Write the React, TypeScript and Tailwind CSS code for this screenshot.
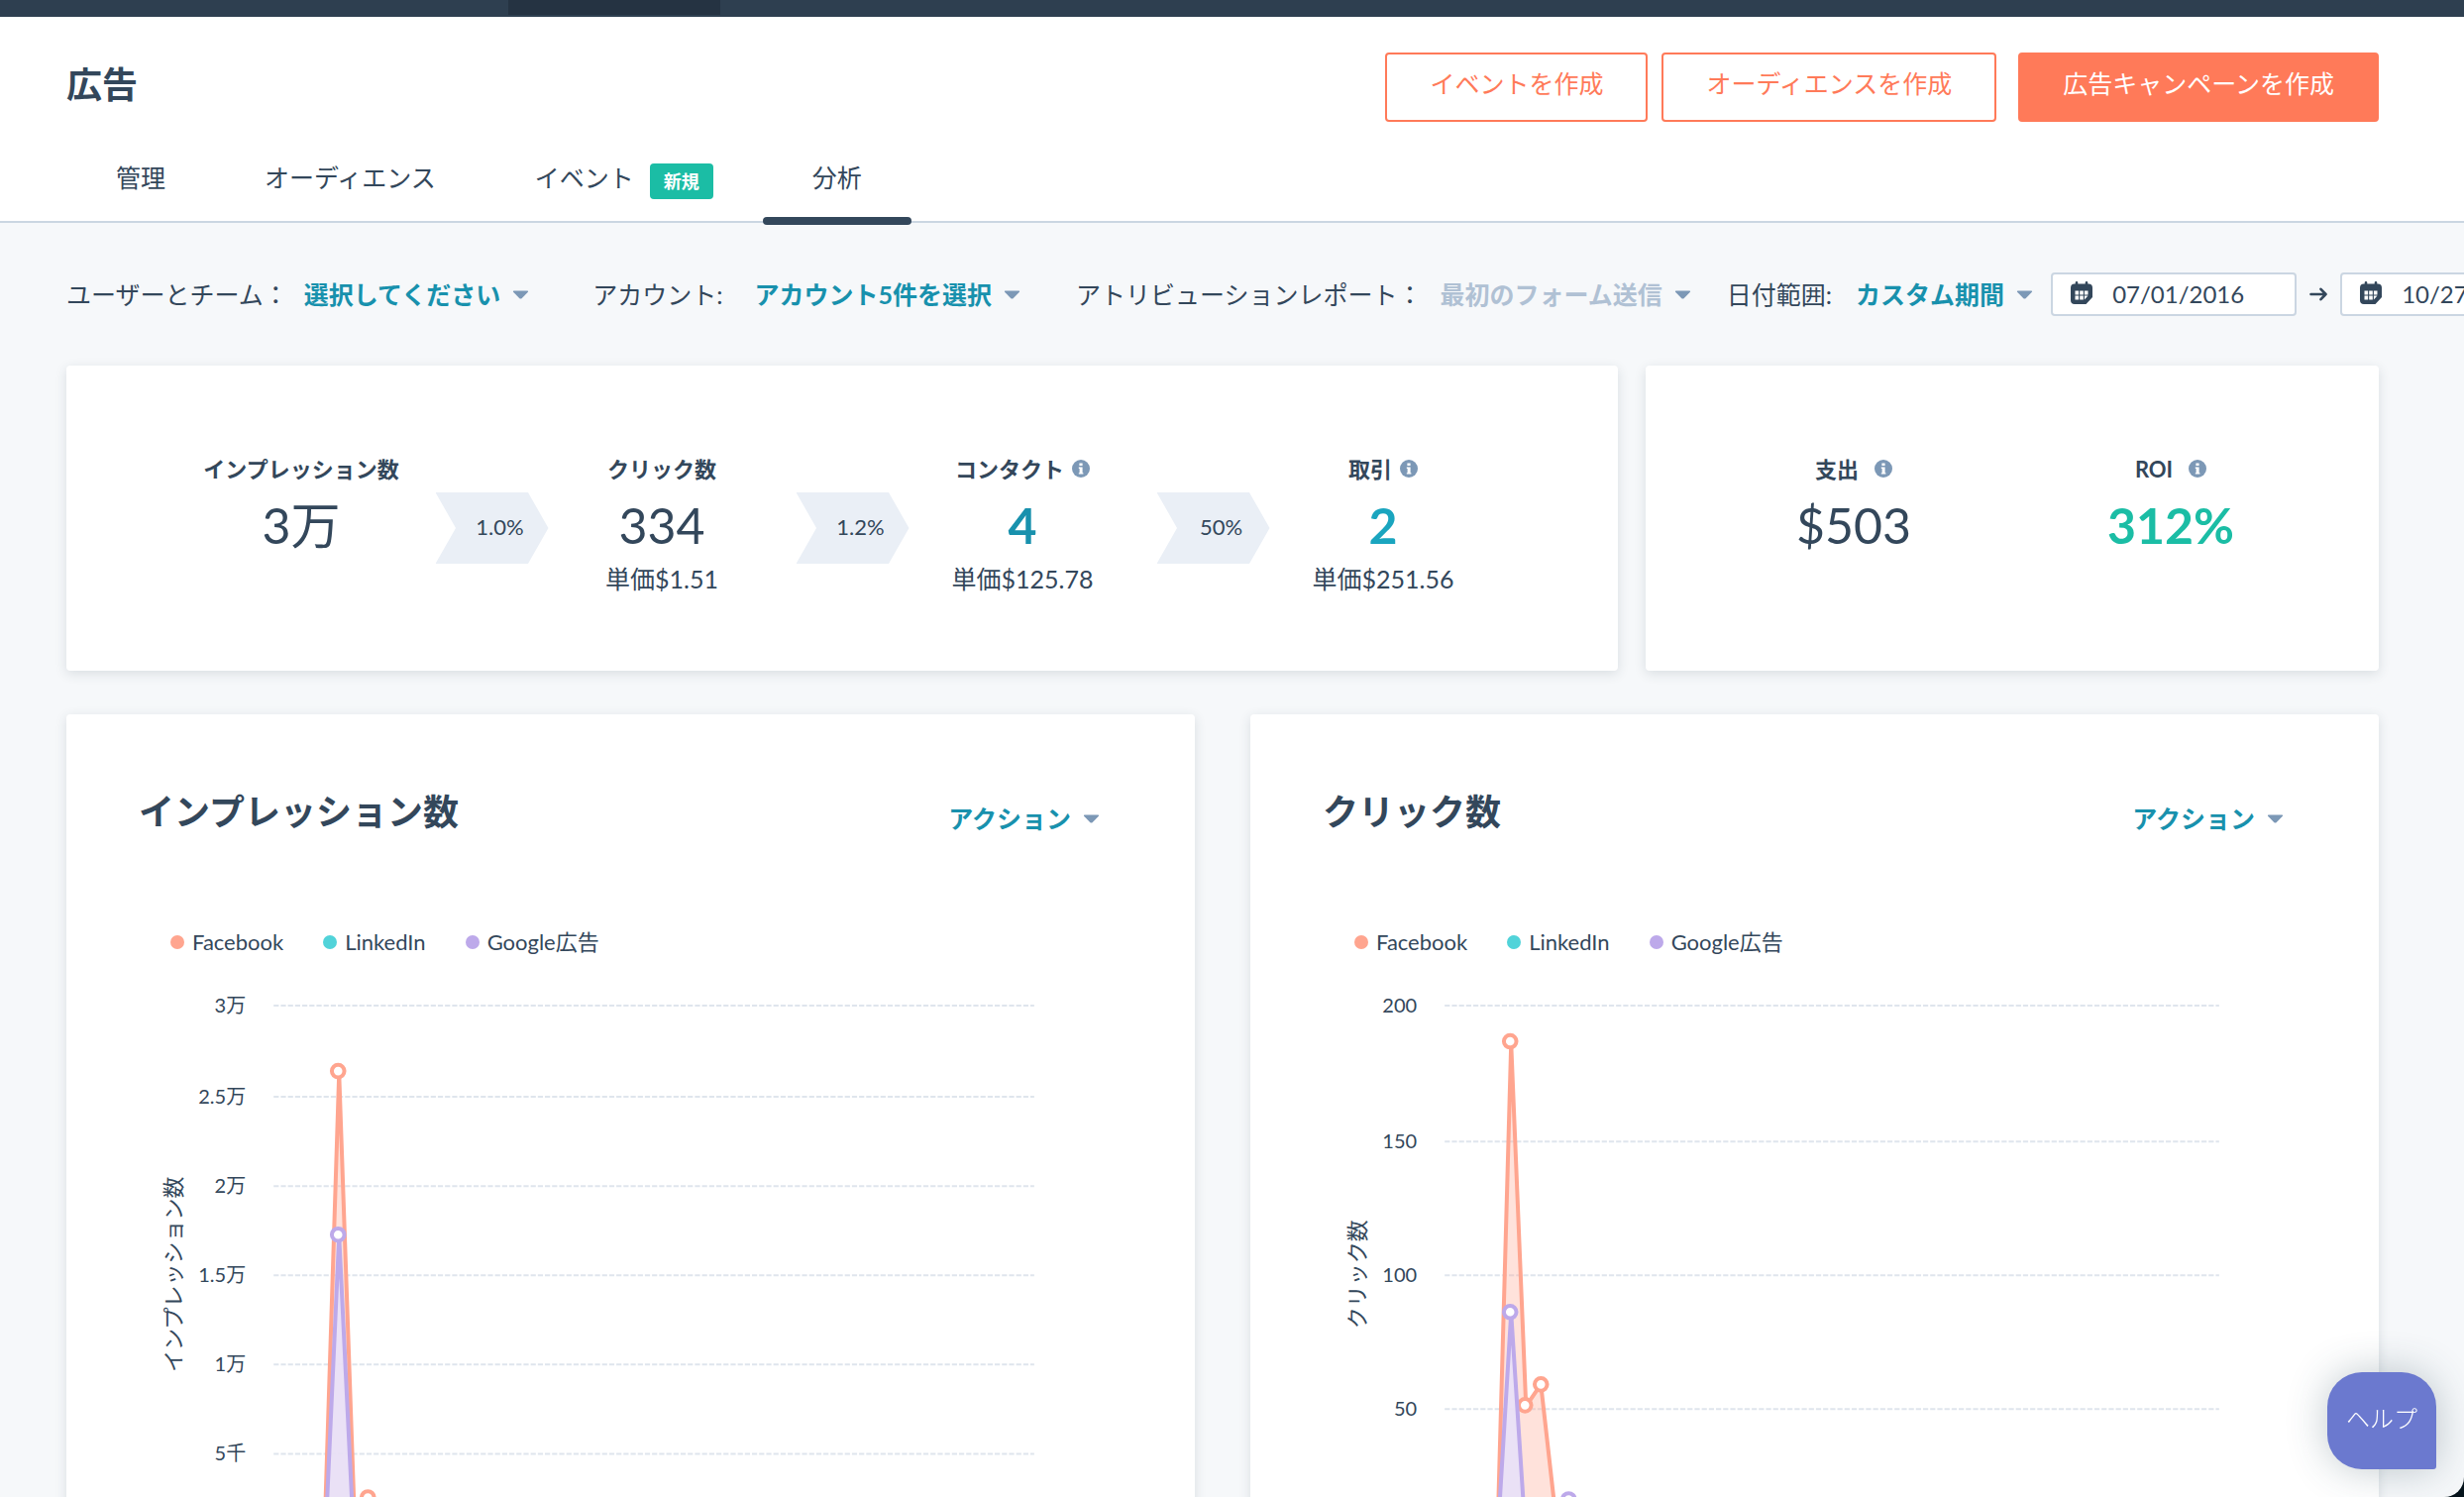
import React, { useState } from "react";

interface Filter {
  id: string;
  label: string;
  value: string;
  labelGap: string;
  itemGap: string;
  disabled?: boolean;
}

interface Series {
  color: string;
  line: number[][];
  dots: number[][];
}

interface ChartData {
  title: string;
  plotLeft: number;
  plotRight: number;
  ticks: { label: string; y: number }[];
  series: Series[];
}

const tabs = [
  { label: "管理" },
  { label: "オーディエンス" },
  { label: "イベント", badge: "新規" },
  { label: "分析", active: true },
];

const filters: Filter[] = [
  {
    id: "team",
    label: "ユーザーとチーム：",
    value: "選択してください",
    labelGap: "gap-4",
    itemGap: "mr-16",
  },
  {
    id: "account",
    label: "アカウント:",
    value: "アカウント5件を選択",
    labelGap: "gap-8",
    itemGap: "mr-14",
  },
  {
    id: "attribution",
    label: "アトリビューションレポート：",
    value: "最初のフォーム送信",
    labelGap: "gap-[18px]",
    itemGap: "mr-9",
    disabled: true,
  },
  {
    id: "range",
    label: "日付範囲:",
    value: "カスタム期間",
    labelGap: "gap-6",
    itemGap: "mr-[18px]",
  },
];

const funnel = [
  { label: "インプレッション数", value: "3万", style: "font-normal" },
  {
    label: "クリック数",
    value: "334",
    style: "font-normal",
    cost: "単価$1.51",
    rate: "1.0%",
  },
  {
    label: "コンタクト",
    value: "4",
    style: "font-bold text-[#1891ad]",
    cost: "単価$125.78",
    rate: "1.2%",
    infoGap: "gap-2",
  },
  {
    label: "取引",
    value: "2",
    style: "font-bold text-[#1aa5bf]",
    cost: "単価$251.56",
    rate: "50%",
    infoGap: "gap-2",
  },
];

const legend = [
  { name: "Facebook", dot: "bg-[#ffa58f]" },
  { name: "LinkedIn", dot: "bg-[#51d3d9]" },
  { name: "Google広告", dot: "bg-[#bda9ea]" },
];

const ORANGE = "#ffa58f";
const PURPLE = "#bda9ea";

const charts: ChartData[] = [
  {
    title: "インプレッション数",
    plotLeft: 209,
    plotRight: 976,
    ticks: [
      { label: "3万", y: 30 },
      { label: "2.5万", y: 122 },
      { label: "2万", y: 212 },
      { label: "1.5万", y: 302 },
      { label: "1万", y: 392 },
      { label: "5千", y: 482 },
    ],
    series: [
      {
        color: ORANGE,
        line: [
          [260, 572],
          [275, 98],
          [291, 560],
          [305, 526],
          [320, 572],
        ],
        dots: [
          [274, 96],
          [304, 526],
        ],
      },
      {
        color: PURPLE,
        line: [
          [261, 572],
          [275, 262],
          [290, 572],
        ],
        dots: [[274, 261]],
      },
    ],
  },
  {
    title: "クリック数",
    plotLeft: 196,
    plotRight: 977,
    ticks: [
      { label: "200", y: 30 },
      { label: "150", y: 167 },
      { label: "100", y: 302 },
      { label: "50", y: 437 },
    ],
    series: [
      {
        color: ORANGE,
        line: [
          [249, 572],
          [263, 68],
          [278, 434],
          [293, 412],
          [311, 572],
        ],
        dots: [
          [262, 66],
          [277, 433],
          [293, 412],
        ],
      },
      {
        color: PURPLE,
        line: [
          [249, 572],
          [263, 340],
          [278, 572],
          [322, 528],
          [337, 572],
        ],
        dots: [
          [262, 339],
          [321, 528],
        ],
      },
    ],
  },
];

const Caret = () => (
  <svg width="17" height="9" viewBox="0 0 17 9" className="shrink-0">
    <path d="M1.5 0.5h14q1 .3.4 1.2L9.8 7.9q-1.3 1.1-2.6 0L1.1 1.7Q.5.8 1.5.5z" fill="#7c98b6" />
  </svg>
);

const InfoIcon = () => (
  <svg width="18" height="18" viewBox="0 0 18 18" className="shrink-0">
    <circle cx="9" cy="9" r="9" fill="#7c98b6" />
    <path d="M7.4 3.4h3.2v2.6H7.4zM6.8 7.6h3.8v5.6h.8v1.4H6.8v-1.4h.8V9h-.8z" fill="#fff" />
  </svg>
);

const CalendarIcon = () => (
  <svg width="22" height="23" viewBox="0 0 22 23" className="mb-1 shrink-0">
    <path
      d="M6 0q1.3 0 1.3 1.3V2.5h7.4V1.3Q14.7 0 16 0t1.3 1.3V2.5H18q4 0 4 4V16l-6.500 7H4q-4 0-4-4V6.500q0-4 4-4h.7V1.300Q4.700 0 6 0z"
      fill="#33475b"
    />
    <path
      d="M4.500 9.500h3.600v4H4.500zM9.200 9.500h3.600v4H9.200zM13.900 9.500h3.600v4H13.900zM4.500 14.600h3.600v4H4.500zM9.200 14.600h3.600v4H9.200zM13.900 14.600h3.600l-3.600 4z"
      fill="#fff"
    />
  </svg>
);

const RightArrow = () => (
  <svg width="18" height="14" viewBox="0 0 18 14" className="mx-[13px] shrink-0">
    <path
      d="M1.500 7h15M11.500 1.800L16.500 7l-5 5.200"
      fill="none"
      stroke="#33475b"
      strokeWidth="2.600"
      strokeLinecap="round"
      strokeLinejoin="round"
    />
  </svg>
);

const FilterSelect = ({ filter }: { filter: Filter }) => (
  <div className={`flex shrink-0 items-center ${filter.labelGap} ${filter.itemGap}`}>
    <label htmlFor={filter.id}>{filter.label}</label>
    <div className="flex items-center gap-3">
      <select
        id={filter.id}
        disabled={filter.disabled}
        className={`field-sizing-content appearance-none bg-transparent font-bold opacity-100 ${
          filter.disabled ? "text-[#b0c1d4]" : "text-[#1891ad]"
        }`}
      >
        <option>{filter.value}</option>
      </select>
      <Caret />
    </div>
  </div>
);

const DateInput = ({ label, initial }: { label: string; initial: string }) => {
  const [value, setValue] = useState(initial);
  return (
    <label className="flex h-11 w-62 shrink-0 items-center gap-5 rounded-[4px] border-2 border-[#cbd6e2] bg-white px-[18px]">
      <CalendarIcon />
      <input
        type="text"
        aria-label={label}
        value={value}
        onChange={(e) => setValue(e.target.value)}
        className="w-full min-w-0 bg-transparent text-2xl outline-none"
      />
    </label>
  );
};

const RateArrow = ({ rate }: { rate: string }) => (
  <div className="w-[135px] shrink-0 pt-10 pl-[21px]">
    <div className="flex h-18 items-center justify-center bg-[#eaeff6] pb-1 pl-4 text-[22px] [clip-path:polygon(0_0,82%_0,100%_50%,82%_100%,0_100%,18%_50%)]">
      {rate}
    </div>
  </div>
);

interface MetricProps {
  label: string;
  value: string;
  style: string;
  cost?: string;
  infoGap?: string;
}

const Metric = ({ label, value, style, cost, infoGap }: MetricProps) => (
  <div className="flex flex-col items-center">
    <div
      className={`flex h-8 items-center text-[22px] font-bold whitespace-nowrap ${infoGap ?? ""}`}
    >
      {label}
      {infoGap && <InfoIcon />}
    </div>
    <div className={`mt-[5px] flex h-18 items-center text-[50px] leading-none ${style}`}>
      {value}
    </div>
    {cost && <div className="h-9 text-[25px] leading-9">{cost}</div>}
  </div>
);

const AreaChart = ({ data }: { data: ChartData }) => (
  <svg viewBox="0 0 1138 640" className="block h-auto w-full" role="img" aria-label={data.title}>
    {data.ticks.map((tick) => (
      <g key={tick.label}>
        <line
          x1={data.plotLeft}
          x2={data.plotRight}
          y1={tick.y}
          y2={tick.y}
          stroke="#dfe5ed"
          strokeWidth="2"
          strokeDasharray="5.2 2"
        />
        <text x={data.plotLeft - 28} y={tick.y + 7} textAnchor="end" fontSize="20" fill="#33475b">
          {tick.label}
        </text>
      </g>
    ))}
    <text
      transform="translate(116 301) rotate(-90)"
      textAnchor="middle"
      fontSize="22"
      fill="#33475b"
    >
      {data.title}
    </text>
    {data.series.map((s) => {
      const points = s.line.map((p) => p.join(",")).join(" ");
      return (
        <g key={s.color}>
          {s.color === PURPLE && <polygon points={points} fill="#fff" fillOpacity="0.9" />}
          <polygon points={points} fill={s.color} fillOpacity="0.32" />
          <polyline points={points} fill="none" stroke={s.color} strokeWidth="4" />
          {s.dots.map(([x, y]) => (
            <circle key={x} cx={x} cy={y} r="6.3" fill="#fff" stroke={s.color} strokeWidth="4" />
          ))}
        </g>
      );
    })}
  </svg>
);

const ChartCard = ({ data }: { data: ChartData }) => (
  <section className="rounded-[4px] bg-white pt-[75px] shadow-[0_3px_12px_rgba(45,62,80,0.14)]">
    <div className="flex items-center justify-between pr-24 pl-[73px]">
      <h2 className="text-4xl leading-11 font-bold">{data.title}</h2>
      <button className="mt-[14px] flex items-center gap-3 text-[25px] leading-8 font-bold text-[#1891ad]">
        アクション
        <Caret />
      </button>
    </div>
    <ul className="mt-[91px] flex gap-10 pl-[105px] text-[22px] leading-9">
      {legend.map((item) => (
        <li key={item.name} className="flex items-center gap-2">
          <span className={`size-[14px] rounded-full ${item.dot}`} />
          {item.name}
        </li>
      ))}
    </ul>
    <div className="mt-4">
      <AreaChart data={data} />
    </div>
  </section>
);

const App: React.FC = () => {
  return (
    <div className="h-screen overflow-hidden bg-[#06141c]">
      <div className="h-full overflow-hidden rounded-br-[20px] bg-[#f6f8fa] font-['Lato','Noto_Sans_CJK_JP',sans-serif] text-[#33475b]">
        <div className="h-[17px] bg-[#2e3f50] pl-[513px]">
          <div className="h-[15px] w-[214px] bg-[#253342]" />
        </div>

        <header className="border-b-2 border-[#cbd6e2] bg-white px-[67px] pt-9">
          <div className="flex items-start justify-between pr-[19px]">
            <h1 className="mt-2 text-4xl leading-12 font-bold">広告</h1>
            <div className="flex text-[25px] leading-8">
              <button className="mr-[14px] h-[70px] rounded-[4px] border-2 border-[#ff7a59] px-[43px] pb-2 text-[#ff7a59]">
                イベントを作成
              </button>
              <button className="mr-[22px] h-[70px] rounded-[4px] border-2 border-[#ff7a59] px-[43px] pb-2 text-[#ff7a59]">
                オーディエンスを作成
              </button>
              <button className="h-[70px] rounded-[4px] border-2 border-[#ff7a59] bg-[#ff7a59] px-[43px] pb-2 text-white">
                広告キャンペーンを作成
              </button>
            </div>
          </div>
          <nav className="mt-[22px] flex h-[78px] text-[25px]">
            {tabs.map((tab) => (
              <a
                key={tab.label}
                href="#"
                className="relative flex items-start px-[50px] pt-4 leading-9"
              >
                {tab.label}
                {tab.badge && (
                  <span className="mt-1 ml-4 flex h-9 items-center rounded-[4px] bg-[#1bbda5] px-[14px] text-lg font-bold text-white">
                    {tab.badge}
                  </span>
                )}
                {tab.active && (
                  <span className="absolute inset-x-0 -bottom-1 h-2 rounded-[4px] bg-[#33475b]" />
                )}
              </a>
            ))}
          </nav>
        </header>

        <div className="flex items-center overflow-hidden pt-[50px] pl-[67px] text-[25px] leading-9 whitespace-nowrap">
          {filters.map((filter) => (
            <FilterSelect key={filter.id} filter={filter} />
          ))}
          <DateInput label="開始日" initial="07/01/2016" />
          <RightArrow />
          <DateInput label="終了日" initial="10/27/2020" />
        </div>

        <main className="px-[67px] pt-[50px]">
          <div className="mr-[19px] grid grid-cols-[1566fr_740fr] gap-7">
            <section className="flex h-77 justify-center rounded-[4px] bg-white pt-22 shadow-[0_3px_12px_rgba(45,62,80,0.14)]">
              {funnel.map((item) => (
                <React.Fragment key={item.label}>
                  {item.rate && <RateArrow rate={item.rate} />}
                  <div className="w-[229px] shrink-0">
                    <Metric
                      label={item.label}
                      value={item.value}
                      style={item.style}
                      cost={item.cost}
                      infoGap={item.infoGap}
                    />
                  </div>
                </React.Fragment>
              ))}
            </section>
            <section className="flex h-77 justify-center rounded-[4px] bg-white pt-22 shadow-[0_3px_12px_rgba(45,62,80,0.14)]">
              <div className="w-80">
                <Metric label="支出" value="$503" style="font-normal" infoGap="gap-4" />
              </div>
              <div className="w-80">
                <Metric
                  label="ROI"
                  value="312%"
                  style="font-bold text-[#1bbda5]"
                  infoGap="gap-4"
                />
              </div>
            </section>
          </div>

          <div className="mt-11 mr-[19px] grid grid-cols-2 gap-14">
            {charts.map((data) => (
              <ChartCard key={data.title} data={data} />
            ))}
          </div>
        </main>

        <button className="fixed right-7 bottom-7 h-[98px] w-[110px] rounded-[35px] rounded-br-[3px] bg-[#6b79cf] pb-1 text-2xl font-light text-white shadow-[0_0_40px_rgba(45,75,90,0.3)]">
          ヘルプ
        </button>
      </div>
    </div>
  );
};

export default App;
